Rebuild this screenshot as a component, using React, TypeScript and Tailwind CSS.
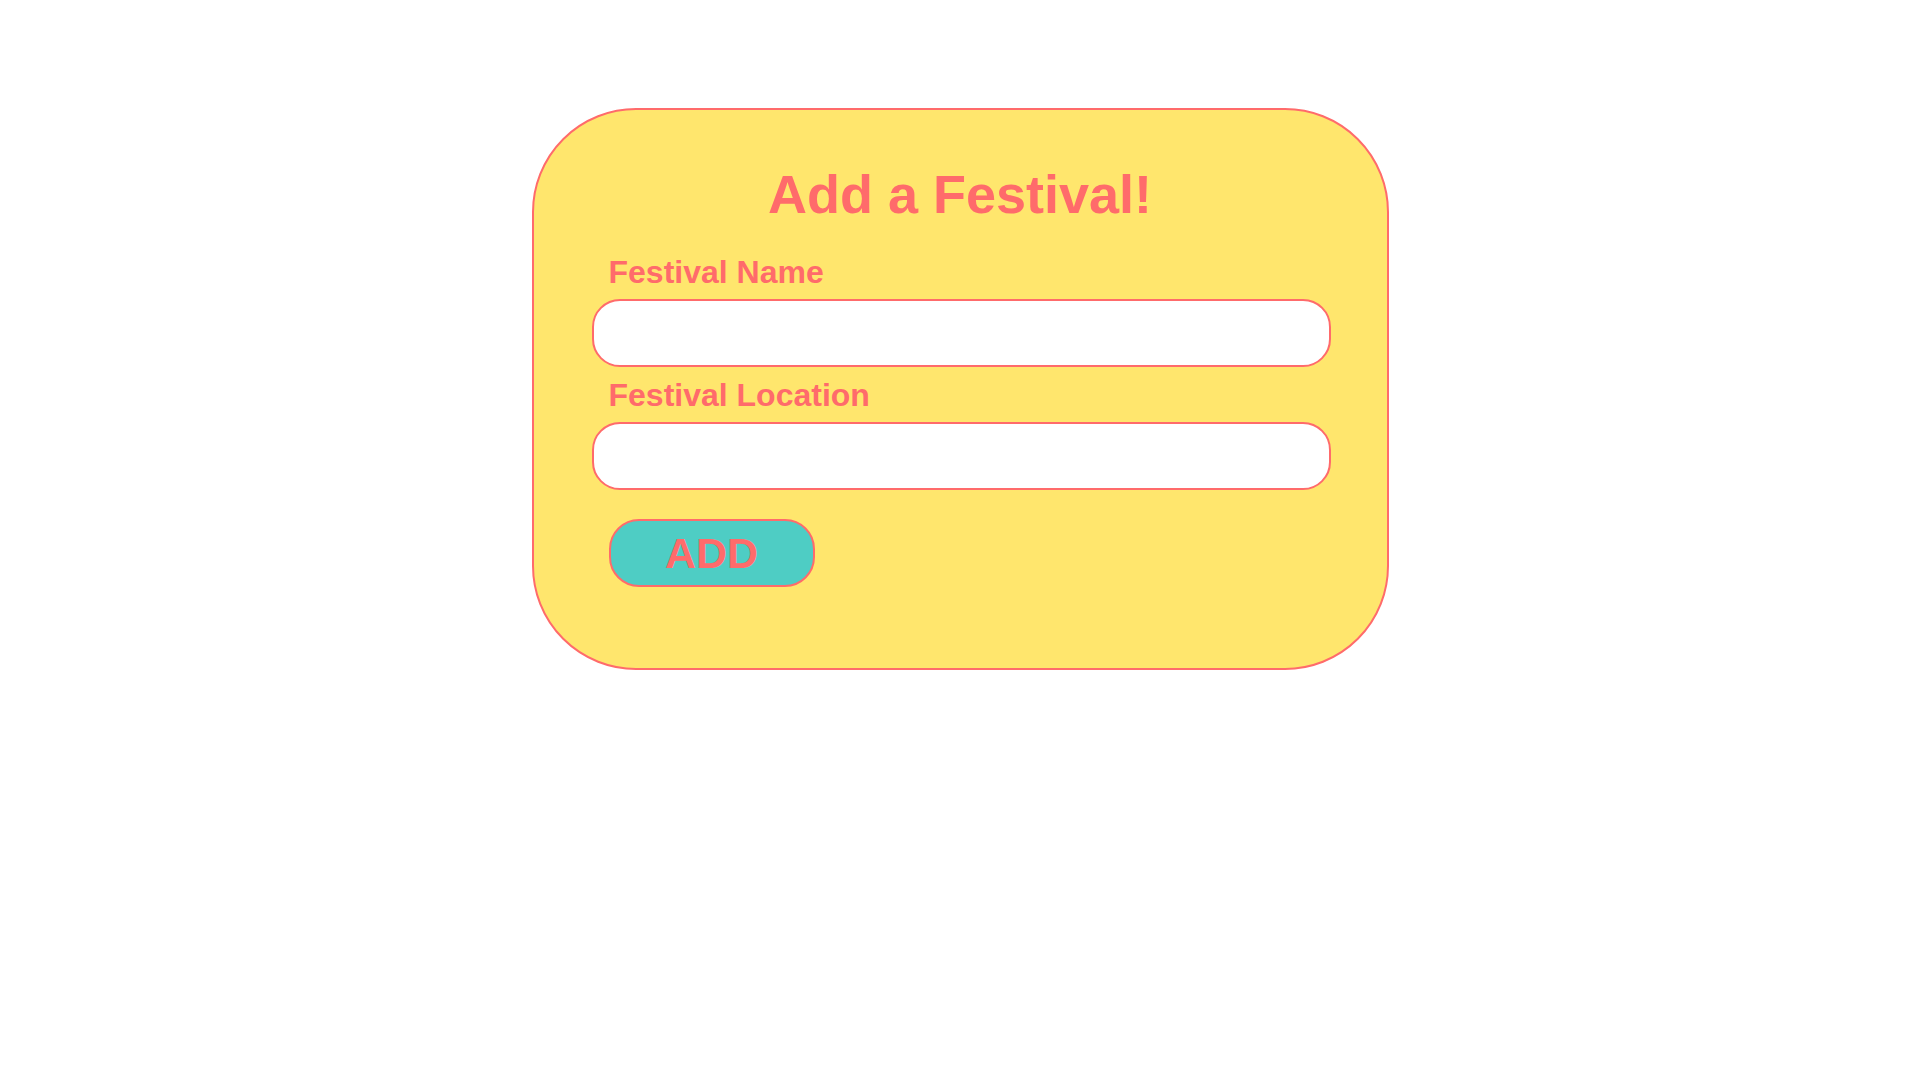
import React from "react";

export default function App() {
  return (
    <div
      className="min-h-screen w-full bg-white pt-[108px]"
      style={{ fontFamily: '"Liberation Sans", Arial, Helvetica, sans-serif' }}
    >
      <div className="mx-auto box-border h-[562px] w-[857px] rounded-[104px] border-2 border-[#FF6B6B] bg-[#FFE66D] pt-[57px] pl-[58px]">
        <h1 className="m-0 text-center -ml-[58px] text-[54px] font-bold leading-none text-[#FF6B6B]">
          Add a Festival!
        </h1>
        <form className="flex w-[739px] flex-col" onSubmit={(e) => e.preventDefault()}>
          <label className="ml-[17px] mt-[35px] text-[32px] font-bold leading-none text-[#FF6B6B]">
            Festival Name
          </label>
          <input
            type="text"
            className="mt-[11px] box-border h-[68px] w-full rounded-[28px] border-2 border-[#FF6B6B] bg-white px-5 text-[24px] outline-none"
          />
          <label className="ml-[17px] mt-[12px] text-[32px] font-bold leading-none text-[#FF6B6B]">
            Festival Location
          </label>
          <input
            type="text"
            className="mt-[11px] box-border h-[68px] w-full rounded-[28px] border-2 border-[#FF6B6B] bg-white px-5 text-[24px] outline-none"
          />
          <button
            type="submit"
            className="ml-[17px] mt-[29px] box-border flex h-[68px] w-[206px] items-center justify-center rounded-[30px] border-2 border-[#FF6B6B] bg-[#4ECDC4] text-[43px] font-bold leading-none text-[#FF6B6B]"
          >
            ADD
          </button>
        </form>
      </div>
    </div>
  );
}
